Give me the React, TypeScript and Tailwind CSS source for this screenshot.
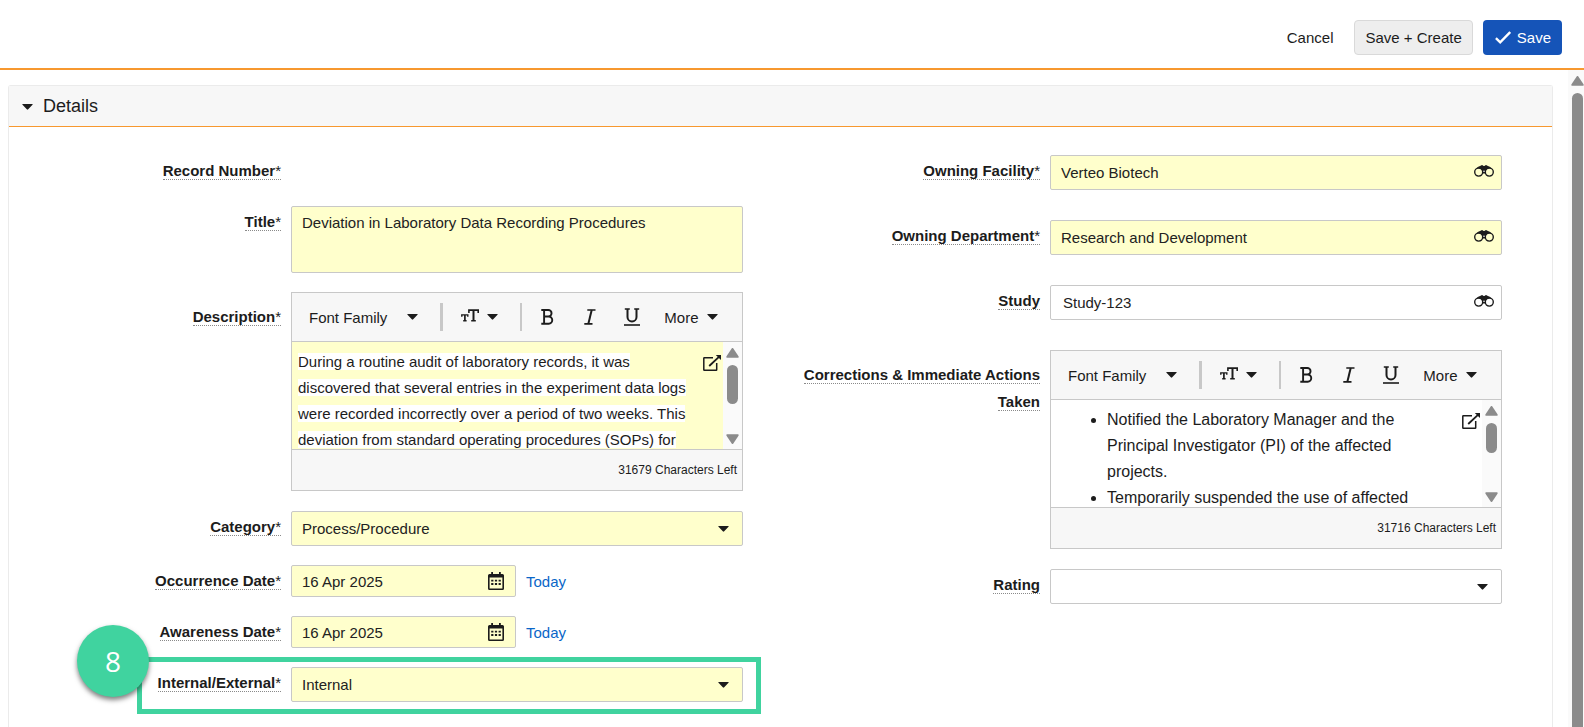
import React from "react";

const FIELD =
  "w-full rounded-[2px] border border-[#c8c8c8] text-[15px] leading-[17px] text-[#222] outline-none";

function Caret() {
  return (
    <svg width="11" height="6" viewBox="0 0 11 6" fill="currentColor" aria-hidden="true">
      <path d="M.8 0h9.4c.5 0 .6.5.3.8L6.200 5.300a1 1 0 0 1-1.400 0L.5.8C.2.5.3 0 .8 0z" />
    </svg>
  );
}

function Binoculars() {
  return (
    <svg width="20" height="12" viewBox="0 0 20 12" fill="none" stroke="currentColor" aria-hidden="true">
      <circle cx="4.7" cy="7.100" r="4" strokeWidth="1.400" />
      <circle cx="15.300" cy="7.100" r="4" strokeWidth="1.400" />
      <path
        d="M2.200 3.700C3.600 1.900 5 1.200 6.400 1.100L7 .2h1.900l.5.900h1.200l.5-.9H13l.6.9c1.400.1 2.800.8 4.200 2.600-2.400-1.100-4.800-.3-6 2.300-.2.600-.4 1.500-.4 2.400H8.600c0-.9-.2-1.800-.4-2.400-1.200-2.600-3.600-3.400-6-2.300z"
        fill="currentColor"
        stroke="none"
      />
      <circle cx="10" cy="6.300" r=".8" fill="#fff" stroke="none" />
    </svg>
  );
}

function CalendarIcon() {
  return (
    <svg width="16" height="18" viewBox="0 0 16 18" fill="currentColor" aria-hidden="true">
      <path
        fillRule="evenodd"
        d="M3.200 0h1.800v2h6V0h1.800v2h1.700A1.500 1.500 0 0 1 16 3.500v13a1.500 1.500 0 0 1-1.500 1.500h-13A1.500 1.500 0 0 1 0 16.500v-13A1.500 1.500 0 0 1 1.500 2h1.700zM1.600 5.600v10.800h12.800V5.600z"
      />
      <path d="M3.200 7.700h2.200v1.900H3.200zM6.900 7.700h2.200v1.900H6.900zM10.600 7.700h2.200v1.900h-2.200zM3.200 11h2.200v1.900H3.200zM6.900 11h2.200v1.900H6.900zM10.600 11h2.200v1.900h-2.200z" />
    </svg>
  );
}

function PopOutIcon() {
  return (
    <svg width="18" height="16" viewBox="0 0 18 16" fill="none" stroke="currentColor" aria-hidden="true">
      <path d="M10 2.800H1.300a.5.500 0 0 0-.5.500v11.400a.5.500 0 0 0 .5.500h11.900a.5.500 0 0 0 .5-.5V8" strokeWidth="1.500" />
      <path d="M6.200 11 16 1.800" strokeWidth="1.800" />
      <path d="M12.800 0H18v5z" fill="currentColor" stroke="none" />
    </svg>
  );
}

function SizeIcon() {
  return (
    <svg width="18" height="13" viewBox="0 0 18 13" fill="none" stroke="currentColor" aria-hidden="true">
      <path d="M7.900 4V1.100h9.300V4M10.200 11.700h4.600" strokeWidth="1.600" />
      <path d="M12.500 1v10.700" strokeWidth="2" />
      <path d="M.8 7.800V5.900h6v1.900M2.200 11.800h3.400" strokeWidth="1.400" />
      <path d="M3.900 6v5.800" strokeWidth="1.700" />
    </svg>
  );
}

function BoldIcon() {
  return (
    <svg width="13" height="16" viewBox="0 0 13 16" fill="none" stroke="currentColor" strokeWidth="1.900" aria-hidden="true">
      <path d="M.3 1h7a3.200 3.200 0 0 1 0 6.500H3.100M7.500 7.500a3.600 3.600 0 0 1 .2 7.300H.3M3.100 1v13.800" />
    </svg>
  );
}

function ItalicIcon() {
  return (
    <svg width="12" height="16" viewBox="0 0 12 16" fill="none" stroke="currentColor" aria-hidden="true">
      <path d="M3.300 1h8.200M.3 14.900h8.200" strokeWidth="1.700" />
      <path d="M7.700 1 4.300 15" strokeWidth="2" />
    </svg>
  );
}

function UnderlineIcon() {
  return (
    <svg width="16" height="18" viewBox="0 0 16 18" fill="none" stroke="currentColor" aria-hidden="true">
      <path d="M.8 1h5M10.200 1h5" strokeWidth="1.700" />
      <path d="M3.500 1v7.900a4.500 4.500 0 0 0 9 0V1" strokeWidth="2" />
      <path d="M0 17h16" strokeWidth="1.600" />
    </svg>
  );
}

function ScrollArrow({ down = false }: { down?: boolean }) {
  return (
    <svg
      width="13"
      height="10"
      viewBox="0 0 13 10"
      fill="#8b8b8b"
      aria-hidden="true"
      className={down ? "shrink-0 rotate-180" : "shrink-0"}
    >
      <path d="M5.500.700a1.200 1.200 0 0 1 2 0l5 7.600c.5.800 0 1.500-.900 1.500H1.400C.5 9.800 0 9.100.5 8.300z" />
    </svg>
  );
}

type RowProps = {
  label: string;
  htmlFor?: string;
  labelId?: string;
  required?: boolean;
  className?: string;
  labelClass?: string;
  children?: React.ReactNode;
};

function Row({ label, htmlFor, labelId, required, className = "", labelClass = "pt-0.5", children }: RowProps) {
  return (
    <div className={`grid grid-cols-[248px_minmax(0,1fr)] gap-x-[10px] ${className}`}>
      <div className={`text-right text-[15px] leading-[27px] font-bold ${labelClass}`}>
        <label id={labelId} htmlFor={htmlFor} className="border-b border-dotted border-[#8a8a8a]">
          {label}
          {required && <span className="font-normal">*</span>}
        </label>
      </div>
      {children}
    </div>
  );
}

function SelectField({ id, value, filled }: { id: string; value: string; filled?: boolean }) {
  return (
    <div className="grid items-center">
      <select
        id={id}
        defaultValue={value}
        className={`col-start-1 row-start-1 h-[35px] appearance-none px-[10px] ${FIELD} ${filled ? "bg-[#ffffcc]" : "bg-white"}`}
      >
        <option value={value}>{value}</option>
      </select>
      <span className="pointer-events-none col-start-1 row-start-1 mr-[14px] justify-self-end">
        <Caret />
      </span>
    </div>
  );
}

function LookupField({ id, value, filled }: { id: string; value: string; filled?: boolean }) {
  return (
    <div className="grid items-center">
      <input
        id={id}
        defaultValue={value}
        className={`col-start-1 row-start-1 h-[35px] pr-10 ${FIELD} ${filled ? "bg-[#ffffcc] pl-[10px]" : "bg-white pl-3"}`}
      />
      <button type="button" aria-label="Look up" className="col-start-1 row-start-1 mr-2 pb-[3px] justify-self-end">
        <Binoculars />
      </button>
    </div>
  );
}

function DateField({ id, value }: { id: string; value: string }) {
  return (
    <div className="flex items-center gap-[10px]">
      <div className="grid w-[225px] items-center">
        <input id={id} defaultValue={value} className={`col-start-1 row-start-1 h-8 bg-[#ffffcc] pr-8 pl-[10px] ${FIELD}`} />
        <button type="button" aria-label="Open calendar" className="col-start-1 row-start-1 mr-3 justify-self-end">
          <CalendarIcon />
        </button>
      </div>
      <a href="#today" className="text-[15px] leading-[17px] text-[#0a66c8]">
        Today
      </a>
    </div>
  );
}

type EditorProps = {
  labelledBy: string;
  left: string;
  filled?: boolean;
  thumbClass: string;
  children: React.ReactNode;
};

function Editor({ labelledBy, left, filled, thumbClass, children }: EditorProps) {
  return (
    <div className="border border-[#c8c8c8] bg-[#f7f7f7] text-[15px] leading-[17px]">
      <div className="flex h-12 items-center pl-[17px]">
        <button type="button" className="flex items-center gap-5">
          Font Family
          <Caret />
        </button>
        <span className="ml-[22px] h-7 w-[3px] bg-[#c8c8c8]" />
        <button type="button" aria-label="Font size" className="ml-[18px] flex items-center gap-2">
          <span className="pb-1">
            <SizeIcon />
          </span>
          <Caret />
        </button>
        <span className="ml-[22px] h-7 w-0.5 bg-[#c8c8c8]" />
        <button type="button" aria-label="Bold" className="ml-[19px]">
          <BoldIcon />
        </button>
        <button type="button" aria-label="Italic" className="ml-[30px]">
          <ItalicIcon />
        </button>
        <button type="button" aria-label="Underline" className="ml-[28px]">
          <UnderlineIcon />
        </button>
        <button type="button" className="ml-6 flex items-center gap-2">
          More
          <Caret />
        </button>
      </div>
      <div className={`flex h-[109px] border-y border-[#c8c8c8] ${filled ? "bg-[#ffffcc]" : "bg-white"}`}>
        <div
          role="textbox"
          aria-multiline="true"
          aria-labelledby={labelledBy}
          contentEditable
          suppressContentEditableWarning
          className="min-w-0 flex-1 overflow-hidden outline-none"
        >
          {children}
        </div>
        <button type="button" aria-label="Open in window" className="mt-[13px] mr-0.5 self-start">
          <PopOutIcon />
        </button>
        <div className="flex w-[19px] flex-col items-center bg-[#fafafa] pt-1.5 pb-[5px]">
          <ScrollArrow />
          <span className={`mt-[7px] w-[11px] rounded-full bg-[#8b8b8b] ${thumbClass}`} />
          <span className="mt-auto flex">
            <ScrollArrow down />
          </span>
        </div>
      </div>
      <p className="flex h-10 items-center justify-end pt-px pr-[5px] text-[12px]">{left} Characters Left</p>
    </div>
  );
}

export default function App() {
  return (
    <div className="flex h-screen flex-col overflow-hidden bg-white font-['Liberation_Sans',Arial,sans-serif] text-[15px] leading-[17px] text-[#1c1c1c]">
      <header className="flex shrink-0 items-center justify-end gap-[10px] border-b-2 border-[#f7982f] pt-5 pr-[22px] pb-[13px]">
        <button type="button" className="h-[35px] px-[11px]">
          Cancel
        </button>
        <button type="button" className="h-[35px] rounded-[4px] border border-[#d9d9d9] bg-[#eeeeee] px-[10px]">
          Save + Create
        </button>
        <button type="button" className="flex h-[35px] items-center gap-[6px] rounded-[4px] bg-[#1554b8] pr-[11px] pl-3 text-white">
          <svg width="16" height="13" viewBox="0 0 16 13" fill="none" stroke="currentColor" strokeWidth="2.400" aria-hidden="true">
            <path d="M.9 7.200 5.200 11.300 15.200 1" />
          </svg>
          Save
        </button>
      </header>

      <div className="flex min-h-0 flex-1">
        <main className="mt-[15px] mr-[15px] ml-2 min-w-0 flex-1 rounded-t-[3px] border border-b-0 border-[#ebebeb]">
          <h2 className="border-b border-[#f7982f] bg-[#f7f7f7]">
            <button type="button" aria-expanded="true" className="flex h-10 items-center gap-[10px] px-[13px] text-[18px] leading-5">
              <span className="pt-0.5">
                <Caret />
              </span>
              Details
            </button>
          </h2>

          <form className="grid grid-cols-2 items-start gap-x-[49px] pt-7 pr-[50px] pl-6">
            <div className="grid gap-y-[19px]">
              <Row label="Record Number" required className="h-8" />
              <Row label="Title" htmlFor="title" required>
                <textarea
                  id="title"
                  defaultValue="Deviation in Laboratory Data Recording Procedures"
                  className={`block h-[67px] resize-none bg-[#ffffcc] px-[10px] py-[7px] ${FIELD}`}
                />
              </Row>
              <Row label="Description" labelId="description-label" required className="pb-px" labelClass="pt-[11px]">
                <Editor labelledBy="description-label" left="31679" filled thumbClass="h-[39px]">
                  <p className="pt-[7px] pr-3 pl-1.5 leading-[26px]">
                    <span className="bg-white">
                      During a routine audit of laboratory records, it was discovered that several entries in the
                      experiment data logs were recorded incorrectly over a period of two weeks. This deviation from
                      standard operating procedures (SOPs) for
                    </span>
                  </p>
                </Editor>
              </Row>
              <Row label="Category" htmlFor="category" required>
                <SelectField id="category" value="Process/Procedure" filled />
              </Row>
              <Row label="Occurrence Date" htmlFor="occurrence" required>
                <DateField id="occurrence" value="16 Apr 2025" />
              </Row>
              <Row label="Awareness Date" htmlFor="awareness" required>
                <DateField id="awareness" value="16 Apr 2025" />
              </Row>
              <Row label="Internal/External" htmlFor="internal" required className="relative">
                <SelectField id="internal" value="Internal" filled />
                <span className="pointer-events-none absolute -top-[10px] -right-[18px] -bottom-3 left-[104px] border-5 border-[#40d39f]" />
                <span className="absolute -top-[42px] left-11 flex size-[72px] items-center justify-center rounded-full bg-[#40d39f] font-['Open_Sans',sans-serif] text-[28px] leading-none text-white shadow-[0_3px_5px_rgba(0,0,0,0.5)]">
                  8
                </span>
              </Row>
            </div>

            <div className="grid gap-y-[19px]">
              <Row label="Owning Facility" htmlFor="facility" required className="pb-[11px]">
                <LookupField id="facility" value="Verteo Biotech" filled />
              </Row>
              <Row label="Owning Department" htmlFor="department" required className="pb-[11px]">
                <LookupField id="department" value="Research and Development" filled />
              </Row>
              <Row label="Study" htmlFor="study" className="pb-[11px]">
                <LookupField id="study" value="Study-123" />
              </Row>
              <Row
                label="Corrections &amp; Immediate Actions Taken"
                labelId="corrections-label"
                className="pb-px"
                labelClass="pt-[11px]"
              >
                <Editor labelledBy="corrections-label" left="31716" thumbClass="h-[30px]">
                  <ul className="list-disc pt-[7px] pr-8 pl-14 text-[16px] leading-[26px]">
                    <li>Notified the Laboratory Manager and the Principal Investigator (PI) of the affected projects.</li>
                    <li>Temporarily suspended the use of affected</li>
                  </ul>
                </Editor>
              </Row>
              <Row label="Rating" htmlFor="rating">
                <SelectField id="rating" value="" />
              </Row>
            </div>
          </form>
        </main>

        <div className="flex w-4 shrink-0 flex-col items-center bg-[#fafafa] pt-1.5 pl-0.5">
          <ScrollArrow />
          <span className="mt-[7px] w-[11px] flex-1 rounded-t-full bg-[#8b8b8b]" />
        </div>
      </div>
    </div>
  );
}
